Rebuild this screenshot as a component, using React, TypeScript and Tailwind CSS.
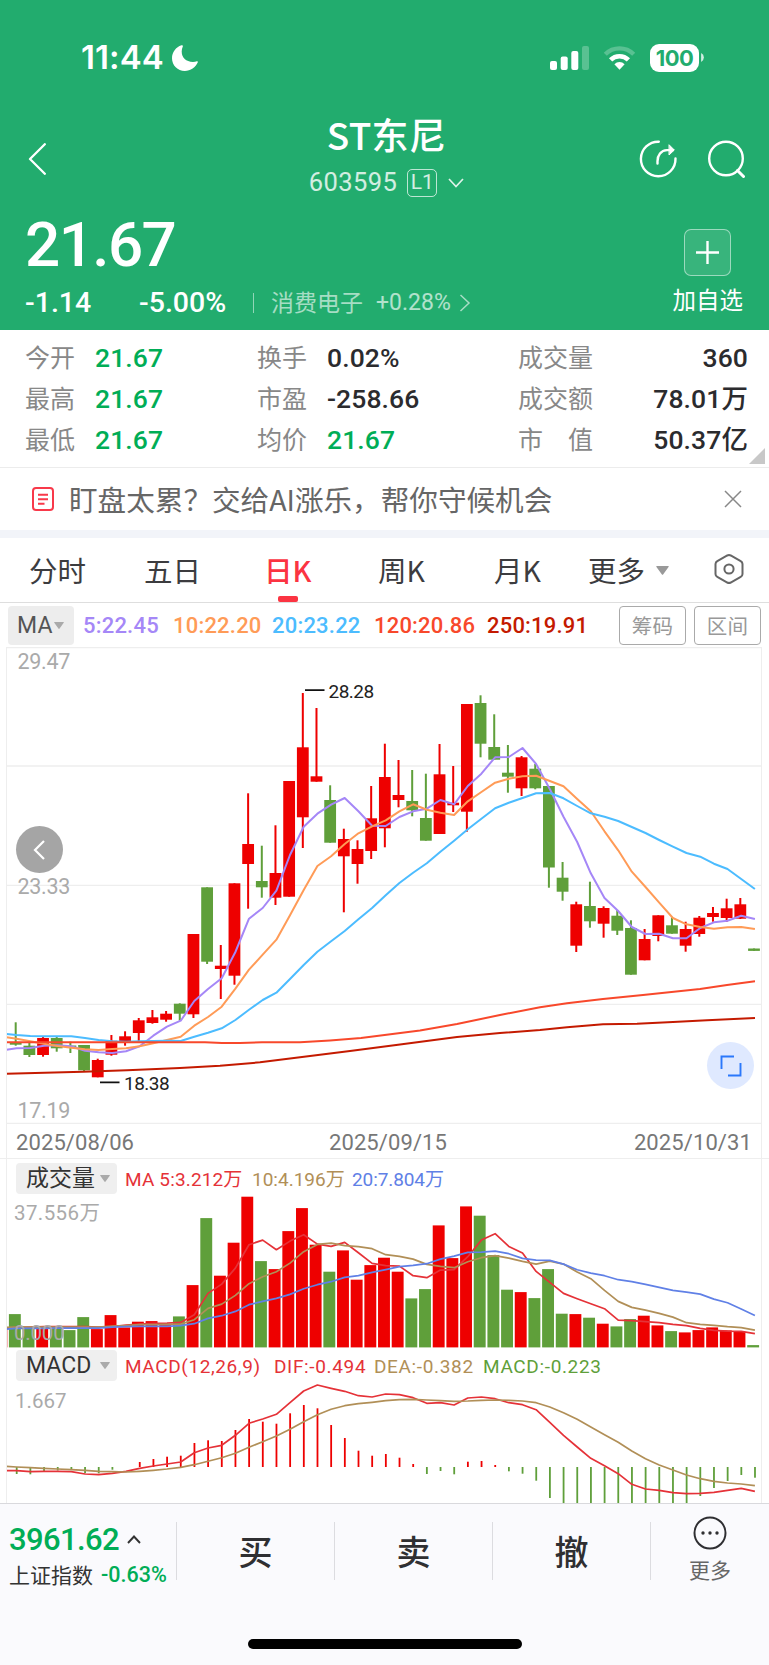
import type { ReactNode } from 'react';

type Candle = ['r' | 'g', number, number, number, number];

const RED = '#ee0000';
const GREEN = '#5f9f3a';

// [color, high, body top, body bottom, low] in chart pixels
const candles: Candle[] = [
  ['g', 375.3, 396, 397.7, 398.7],
  ['g', 396, 398.7, 408, 410],
  ['r', 390, 391, 408, 409.7],
  ['g', 389.7, 391, 401.3, 404.7],
  ['g', 394.7, 398.5, 400, 406],
  ['g', 398, 398, 423.3, 424],
  ['r', 411.7, 413, 430.3, 430.3],
  ['r', 388, 393.7, 407.7, 408.7],
  ['r', 384.3, 389.3, 395, 398.7],
  ['r', 371, 373.3, 386, 394.3],
  ['r', 363, 370.3, 376, 376.7],
  ['r', 364, 366.7, 372.7, 374.7],
  ['g', 356.3, 356.7, 366.7, 373.7],
  ['r', 287, 287, 367.3, 371],
  ['g', 240.3, 240.3, 314.7, 317],
  ['r', 298, 318.7, 322, 352],
  ['r', 236.3, 236.3, 328.7, 337.7],
  ['r', 146.3, 197, 217, 261.7],
  ['g', 198.7, 234, 240.3, 250.7],
  ['r', 178.3, 226, 250.7, 258],
  ['r', 134, 134, 249.7, 249.7],
  ['r', 46, 100.3, 170.3, 201],
  ['r', 61, 129.3, 134.7, 134.7],
  ['g', 138.3, 153, 195.7, 195.7],
  ['r', 181.7, 192, 209.3, 265.3],
  ['r', 193.3, 202, 217, 236.7],
  ['r', 139, 171.3, 204, 212],
  ['r', 96.7, 130, 181.3, 200.3],
  ['r', 113, 148, 153, 160.3],
  ['g', 123, 154, 163.3, 169.3],
  ['g', 126.7, 171, 193.7, 193.7],
  ['r', 97, 127.3, 187, 187],
  ['r', 119, 155.7, 158.3, 165],
  ['r', 57, 57, 164.7, 184.7],
  ['g', 48.3, 56, 96.7, 110.3],
  ['g', 67.3, 100, 112.7, 112.7],
  ['g', 98, 125.7, 129.7, 145.7],
  ['r', 109, 110.3, 141.3, 149],
  ['g', 117, 121.7, 141.3, 142.3],
  ['g', 139, 139, 220.5, 240.7],
  ['g', 215, 230.7, 244.7, 253.7],
  ['r', 254.7, 257.3, 298.7, 305],
  ['g', 234.7, 259, 274.3, 280.7],
  ['r', 259.3, 261, 276.7, 290.7],
  ['g', 263, 268.7, 283.7, 288],
  ['g', 273.3, 281, 327.7, 327.7],
  ['r', 282, 292, 313.3, 313.3],
  ['r', 268.3, 268.3, 289, 294.3],
  ['g', 270.3, 278.3, 286.7, 286.7],
  ['r', 274.7, 282, 298.7, 304.7],
  ['r', 269, 270.7, 287, 289.7],
  ['r', 260, 266, 270, 274.7],
  ['r', 251.7, 261.3, 271, 275],
  ['r', 251, 257.3, 271.7, 272],
  ['g', 301.5, 301.5, 303.9, 303.9],
];

// every series starts with the point on the left edge of the chart
const ma5 = [402.7, 401.3, 401, 398.7, 398.3, 399.3, 403.7, 405.3, 406, 404.3, 399.3, 388.7, 379.7, 373.7, 354, 342, 331.3, 305, 271.7, 261, 243.7, 208, 179.7, 166.7, 157.7, 151, 164.3, 178.7, 179, 170, 164.3, 161.7, 153, 157.3, 139, 126.7, 110.3, 110, 101, 117, 142, 169.7, 195, 226.3, 251, 264, 280, 287, 286.7, 291.3, 291.3, 281, 275.3, 273.7, 268.7, 272];
const ma10 = [390.3, 391.7, 394.3, 396.7, 399, 400.7, 402.3, 403, 402, 401.3, 399.3, 396.3, 393, 389.7, 378.7, 370, 359.7, 341.7, 322.7, 307.7, 292.7, 268.3, 243, 219, 209.3, 197, 186.3, 179.3, 173.3, 164.3, 157.3, 162.7, 165.7, 168, 154.3, 145, 135.7, 131.7, 129.3, 128.7, 134, 139.3, 152, 164.3, 184.3, 203.3, 224.7, 240, 255.7, 271, 277.3, 280, 281.7, 280.3, 280, 282];
const ma20 = [387, 388, 389, 389.3, 389.3, 389.3, 391, 393, 394.3, 394.7, 394.3, 394, 393.7, 394, 389.7, 385.7, 381.3, 373, 362.7, 353, 345.7, 332, 318, 304.7, 294.3, 284, 272.3, 261, 248.3, 236, 225.7, 216.3, 204.7, 193.7, 182.3, 171.7, 161.3, 155.7, 151, 146.3, 146, 151.3, 159, 166.3, 169.7, 174, 180, 186, 193, 199.7, 206, 209.7, 216.7, 222, 232, 242];

const volumes = [33.3, 20.5, 20.7, 20, 17.3, 30.3, 18.3, 32.3, 20, 25.7, 26.3, 22.3, 31, 62.3, 129.3, 71.7, 104.7, 150.7, 86.3, 78.3, 116.3, 139.3, 102.7, 75.7, 97, 67.7, 82.3, 89.7, 75.7, 49, 58.3, 122, 89.3, 141, 131.7, 92.3, 57.7, 55.3, 49.3, 78.3, 33.7, 33.3, 29.7, 23.7, 21, 28.3, 31.7, 22, 16.3, 15, 17.3, 20, 17, 15.7, 2.3];
const vol5 = [19, 20, 20.3, 20.7, 20.7, 20.7, 20.7, 20.3, 20.7, 22.3, 23.3, 24, 24.3, 25, 32.7, 54, 63.3, 79.3, 102.7, 107.3, 97.7, 106.3, 112.7, 103.3, 101, 105, 94.7, 84, 81.7, 81.3, 71.7, 69.7, 77.3, 77.7, 90.7, 107.3, 113.7, 101, 94.3, 76, 65, 54, 48.7, 43.7, 38.7, 27.3, 26.7, 25.7, 24.7, 23, 21.7, 19, 17, 16.3, 16, 13.7];
const vol10 = [20, 20.3, 20.3, 20.3, 20.3, 20.3, 20.3, 20.3, 21.3, 21.7, 22.7, 22.7, 23, 23.3, 27.7, 39, 43.3, 52, 63.7, 70.7, 75.7, 84.3, 95.7, 103, 104.3, 101.7, 100.7, 98.7, 92.7, 91, 88.3, 83, 81, 79.7, 85.7, 89.7, 91.7, 89.3, 86, 83.3, 86.3, 83.3, 75.3, 68.7, 57, 46, 40, 37.3, 34, 30.3, 24.7, 23, 22, 20.7, 19.7, 17.3];
const vol20 = [18.3, 19, 19, 19, 19.3, 19.3, 19.3, 19.3, 20.3, 20.7, 21, 21, 21, 21.7, 23.7, 29, 31.7, 36, 42.7, 46, 49, 53, 58.7, 62.7, 65.7, 70, 71.7, 75, 77.7, 80.7, 82, 83.7, 88.3, 91.3, 95, 95.3, 96.3, 93.7, 89, 87.3, 87, 83.3, 77.7, 74.3, 71.7, 67.7, 65.7, 63, 60, 57, 55.3, 53.3, 48.3, 44.7, 38.3, 32];

const macd = [-7, -7.3, -4.7, -3.5, -3, -6.3, -6.3, -2.7, 0, 5, 8, 10.3, 11.3, 24, 26.7, 26, 37, 48, 45.3, 43.3, 53.7, 62, 58.7, 42, 29, 16.3, 11.3, 13, 9.3, 3, -7, -4, -7.3, 5.3, 6, 2, -4.3, -6.7, -13.7, -31, -36, -36, -36, -36, -36, -36, -36, -36, -36, -36, -29, -21, -14, -8, -10.7];
const dif = [-3.7, -3.7, -4.7, -4.3, -4.3, -4.7, -7, -7.7, -6.3, -4.3, -1.3, 1, 3, 5, 14.3, 19, 21.7, 31.7, 43.7, 48, 52.7, 64.3, 76, 82, 78.7, 75.7, 71.3, 70, 73, 72.3, 69.3, 63.7, 64.3, 62, 69, 70, 68.3, 64.3, 62.3, 57.3, 44.7, 31.7, 20, 8.7, 1.3, -6.7, -17.3, -22, -23.3, -25.7, -26.7, -26.3, -25.3, -23.3, -21.3, -24.3];
const dea = [0.7, 0, -0.7, -1.3, -2, -2.7, -3.3, -4.3, -4.7, -5, -4.3, -3.3, -2, -0.3, 2.3, 5.7, 9.3, 13.7, 19.7, 25.3, 31, 37.7, 45.3, 52.3, 57.7, 61.3, 63.3, 64.7, 66.3, 67.3, 67.7, 67, 66.3, 65.7, 66, 66.7, 67, 66.7, 66, 64.3, 60, 54.3, 47.7, 40, 32.3, 24.7, 16, 8.3, 2, -3, -8, -11.7, -14.3, -16, -17, -18.7];

const STEP = 13.672;
const candleX = (i: number) => 15.7 + i * STEP;

// baseline set: y is measured up from it, otherwise down from the top
function toPoints(values: number[], baseline?: number) {
  return values
    .map((v, i) => {
      const x = i === 0 ? 6.5 : 16.6 + (i - 1) * STEP;
      const y = baseline === undefined ? v : baseline - v;
      return `${x.toFixed(1)},${y.toFixed(1)}`;
    })
    .join(' ');
}

function Line({ points, color, width = 2 }: { points: string; color: string; width?: number }) {
  return <polyline points={points} fill="none" stroke={color} strokeWidth={width} strokeLinejoin="round" />;
}

function Caret({ className }: { className: string }) {
  return (
    <svg viewBox="0 0 10 7" className={className}>
      <path d="M0.6 0h8.8q.8 0 .3.7L5.6 6.5q-.6.8-1.2 0L.3.7Q-.2 0 .6 0z" fill="currentColor" />
    </svg>
  );
}

function StatusBar() {
  return (
    <div className="flex h-[114px] items-center pt-[1px] pr-[65px] pl-[81px]">
      <span className="w-[84px] font-['Inter'] text-[33px] leading-none font-semibold tracking-[0.1px] whitespace-nowrap">11:44</span>
      <svg viewBox="0 0 26 26" className="ml-[7px] h-[26px] w-[26px]">
        <path d="M9.5.3C3.9 2 0 7.3 0 13.2 0 20.3 5.7 26 12.8 26c5.7 0 10.9-3.5 13-8.7.3-.7-.2-1.2-.9-1-1.2.4-2.5.6-3.9.6C14 16.9 9.700 12.5 9.700 6.5c0-1.900.4-3.600 1.100-5.100C11.200.5 10.500 0 9.500.3z" fill="white" />
      </svg>
      <div className="ml-auto flex items-center">
        <svg viewBox="0 0 39 24" className="h-[24px] w-[39px]" fill="white">
          <rect x="0" y="15" width="7" height="9" rx="2" />
          <rect x="10.7" y="10.5" width="7" height="13.5" rx="2" />
          <rect x="21.3" y="5" width="7" height="19" rx="2" />
          <rect x="32" y="0" width="7" height="24" rx="2" opacity="0.25" />
        </svg>
        <svg viewBox="0 0 33 24" className="ml-[14px] h-[24px] w-[33px]">
          <path d="M2.3 8.2a20.2 20.2 0 0 1 28.4 0" stroke="white" strokeWidth="4.4" fill="none" opacity="0.25" />
          <path d="M7.6 13.900a12.6 12.6 0 0 1 17.8 0" stroke="white" strokeWidth="4.6" fill="none" />
          <path d="M11.400 18.200a7.200 7.200 0 0 1 10.200 0L16.500 23.800z" fill="white" />
        </svg>
        <div className="ml-[14px] flex h-[28px] w-[49px] items-center justify-center rounded-[9px] bg-white font-['Inter'] text-[22px] leading-none font-bold tracking-[-0.6px] text-[#22ac6e]">
          100
        </div>
        <svg viewBox="0 0 3 10" className="ml-[2px] h-[9px] w-[3px]">
          <path d="M0 0q3 1.5 3 5t-3 5z" fill="white" opacity="0.8" />
        </svg>
      </div>
    </div>
  );
}

function NavBar() {
  return (
    <div className="flex h-[90px] items-center justify-between pr-[24px] pl-[28px]">
      <div className="w-[106px]">
        <svg viewBox="0 0 18 32" className="h-[32px] w-[18px]" fill="none" stroke="white" strokeWidth="2.300">
          <path d="M16.800 1.200L2 16l14.800 14.800" strokeLinecap="round" strokeLinejoin="round" />
        </svg>
      </div>
      <div className="flex flex-col items-center pb-[6px]">
        <div className="text-[37px] leading-[38px] font-medium tracking-[0.300px]">ST东尼</div>
        <div className="mt-[15px] flex h-[30px] items-center font-['Roboto']">
          <span className="text-[25.500px] leading-none tracking-[0.400px] text-white/80">603595</span>
          <span className="ml-[10px] flex h-[28px] w-[30px] items-center justify-center rounded-[5px] border border-white/70 text-[21px] leading-none text-white/80">L1</span>
          <svg viewBox="0 0 16 10" className="ml-[11px] h-[10px] w-[16px]" fill="none" stroke="white" strokeWidth="1.700" opacity="0.85">
            <path d="M1 1l7 7.500L15 1" />
          </svg>
        </div>
      </div>
      <div className="flex w-[106px] items-center justify-between">
        <svg viewBox="0 0 38 38" className="h-[38px] w-[38px]" fill="none" stroke="white" strokeWidth="2.400" strokeLinecap="round">
          <path d="M19.800 1.700A17.300 17.300 0 1 0 36.500 18.500" />
          <path d="M18.500 23.500v-2.300c0-6.200 3.500-10.900 9.500-11.100h6" />
          <path d="M30.300 5l5 5-5 4.700z" fill="white" strokeWidth="1" strokeLinejoin="round" />
        </svg>
        <svg viewBox="0 0 38 38" className="h-[38px] w-[38px]" fill="none" stroke="white" strokeWidth="2.400" strokeLinecap="round">
          <circle cx="19" cy="18.500" r="16.800" />
          <path d="M30.500 30.500l6 6" strokeWidth="3" />
        </svg>
      </div>
    </div>
  );
}

function PriceHeader() {
  return (
    <div className="flex h-[126px] justify-between pr-[26px] pl-[25px]">
      <div>
        <div className="mt-[10px] font-['Roboto'] text-[62px] leading-[62px] font-medium tracking-[-1.600px]">21.67</div>
        <div className="mt-[11px] flex h-[32px] items-center font-['Roboto'] leading-none">
          <span className="w-[114px] text-[28.500px] font-medium">-1.14</span>
          <span className="w-[114px] text-[28.500px] font-medium">-5.00%</span>
          <span className="h-[20px] w-px bg-white/50" />
          <span className="ml-[17px] -mt-[3px] font-['Noto_Sans_CJK_SC'] text-[23px] text-white/60">消费电子</span>
          <span className="ml-[13px] -mt-[1px] text-[23px] text-white/65">+0.28%</span>
          <svg viewBox="0 0 12 18" className="ml-[8px] -mt-[1px] h-[18px] w-[12px]" fill="none" stroke="white" strokeWidth="1.500" opacity="0.600">
            <path d="M1.500 1l8.500 8-8.500 8" />
          </svg>
        </div>
      </div>
      <div className="flex flex-col items-center pt-[25px]">
        <div className="flex h-[47px] w-[47px] items-center justify-center rounded-[7px] border border-white/50 bg-white/10">
          <svg viewBox="0 0 24 24" className="h-[23px] w-[23px]" stroke="white" strokeWidth="2.500">
            <path d="M12 0v24M0 12h24" />
          </svg>
        </div>
        <div className="mt-[11px] text-[23.500px] leading-[24px]">加自选</div>
      </div>
    </div>
  );
}

const stats = [
  [['今开', '21.67', true], ['换手', '0.02%', false], ['成交量', '360', false]],
  [['最高', '21.67', true], ['市盈', '-258.66', false], ['成交额', '78.01万', false]],
  [['最低', '21.67', true], ['均价', '21.67', true], ['市　值', '50.37亿', false]],
] as [string, string, boolean][][];

function Stats() {
  return (
    <div className="relative h-[138px] border-b border-[#ececec] pt-[7px]">
      {stats.map((row, r) => (
        <div key={r} className="flex h-[41px] items-center pr-[21px] pl-[25px] leading-none">
          {row.map(([label, value, up], c) => (
            <div key={label} className={c === 0 ? 'flex w-[232px] items-center' : c === 1 ? 'flex w-[261px] items-center' : 'flex flex-1 items-center justify-between'}>
              <span className="-mt-[2px] mr-[20px] text-[25px] text-[#888]">{label}</span>
              <span className={`${up ? 'text-[#00ad56]' : 'text-[#2b2b2e]'} pt-[2px] font-['Roboto','Noto_Sans_CJK_SC'] text-[26.500px] font-medium tracking-[0.100px]`}>{value}</span>
            </div>
          ))}
        </div>
      ))}
      <svg viewBox="0 0 16 16" className="absolute right-[4px] bottom-[3px] h-[16px] w-[16px]">
        <path d="M16 0v16H0z" fill="#c8c8c8" />
      </svg>
    </div>
  );
}

function Notice() {
  return (
    <div className="flex h-[62px] items-center pr-[27px] pl-[32px]">
      <svg viewBox="0 0 22 24" className="h-[24px] w-[22px]" fill="none" stroke="#f8394a" strokeWidth="2">
        <rect x="1" y="1" width="20" height="22" rx="3" />
        <path d="M6 7.700h10M6 12.200h10M6 16.700h6.500" />
      </svg>
      <span className="ml-[15px] pt-[1px] text-[28.600px] leading-none text-[#666]">盯盘太累？交给AI涨乐，帮你守候机会</span>
      <svg viewBox="0 0 18 18" className="ml-auto h-[18px] w-[18px]" stroke="#888" strokeWidth="1.500">
        <path d="M1 1l16 16M17 1L1 17" />
      </svg>
    </div>
  );
}

function Tabs() {
  return (
    <div className="flex h-[65px] items-center border-b border-[#dedede] pl-[29px] text-[28.500px] leading-none text-[#3c3c3f]">
      <span className="w-[115px]">分时</span>
      <span className="w-[120px]">五日</span>
      <span className="relative w-[114px] font-medium text-[#fb3442]">
        日K
        <span className="absolute top-[40px] left-[14px] h-[6px] w-[20px] rounded-[2px] bg-[#fb3442]" />
      </span>
      <span className="w-[116px]">周K</span>
      <span className="w-[94px]">月K</span>
      <span>更多</span>
      <Caret className="ml-[11px] h-[9px] w-[13px] text-[#999]" />
      <svg viewBox="0 0 30 30" className="mb-[2px] ml-[45px] h-[30px] w-[30px]" fill="none" stroke="#666" strokeWidth="2">
        <path d="M13.300 1.500q1.700-.9 3.400 0l10 5.600q1.800 1 1.800 3v9.800q0 2-1.800 3l-10 5.600q-1.700.9-3.400 0l-10-5.600q-1.800-1-1.800-3v-9.800q0-2 1.800-3z" />
        <circle cx="15" cy="15" r="4.600" />
      </svg>
    </div>
  );
}

function MaRow() {
  return (
    <div className="flex h-[44px] items-center pr-[8px] pl-[8px] font-['Roboto'] text-[22px] leading-none font-medium tracking-[0.200px]">
      <div className="flex h-[39px] w-[66px] items-center rounded-[4px] bg-[#ededed] pl-[9px] text-[23px] font-normal text-[#555]">
        MA
        <Caret className="ml-[1px] h-[7px] w-[10px] text-[#aaa]" />
      </div>
      <span className="ml-[9px] w-[90px] pt-[1px] text-[#a587f7]">5:22.45</span>
      <span className="w-[99px] pt-[1px] text-[#ff9b57]">10:22.20</span>
      <span className="w-[102px] pt-[1px] text-[#4cbcff]">20:23.22</span>
      <span className="w-[113px] pt-[1px] text-[#f8482b]">120:20.86</span>
      <span className="pt-[1px] text-[#c41a00]">250:19.91</span>
      <span className="ml-auto flex h-[39px] w-[67px] items-center justify-center rounded-[4px] border border-[#aaa] font-['Noto_Sans_CJK_SC'] text-[20.500px] font-normal text-[#999]">筹码</span>
      <span className="ml-[8px] flex h-[39px] w-[67px] items-center justify-center rounded-[4px] border border-[#aaa] font-['Noto_Sans_CJK_SC'] text-[20.500px] font-normal text-[#999]">区间</span>
    </div>
  );
}

function PriceChart() {
  return (
    <div className="relative h-[477px]">
      <svg viewBox="0 0 769 477" className="block h-[477px] w-[769px] font-['Roboto']">
        {[0.7, 119, 238.3, 357.3, 476.3].map((y) => (
          <path key={y} d={`M6 ${y}H762`} stroke="#eeeeee" strokeWidth="1.300" />
        ))}
        {candles.map(([color, high, top, bottom, low], i) => (
          <g key={i} fill={color === 'r' ? RED : GREEN}>
            <rect x={candleX(i) - 1} y={high} width="2" height={low - high} />
            <rect x={candleX(i) - 5.9} y={top} width="11.800" height={Math.max(bottom - top, 1.5)} />
          </g>
        ))}
        <Line points={toPoints(ma5)} color="#a587f7" />
        <Line points={toPoints(ma10)} color="#ff9b57" />
        <Line points={toPoints(ma20)} color="#4cbcff" />
        <Line points="6.500,395.300 205,395.300 222,396 240,396 262,395.200 300,395.300 330,393.500 361,391 420,383.500 457,377 500,368 540,360.300 567,356.300 603,352 643,348 700,342 727,338 755,334.300" color="#f8482b" />
        <Line points="6.500,426.700 83,424.700 127,423.300 180,421 220,418.700 260,415.300 350,404 400,397.500 457,390 500,386 540,383 567,380.300 603,377.300 637,376.700 673,375 707,373.300 755,371" color="#c41a00" />
        <g fill="#aaaaaa" fontSize="21.500" letterSpacing="-0.300">
          <text x="17.500" y="22">29.47</text>
          <text x="17.500" y="246.800">23.33</text>
          <text x="17.500" y="471">17.19</text>
        </g>
        <g fill="#222222" fontSize="19" letterSpacing="-0.500">
          <path d="M305 43.200h19.500M100 435.300h19.500" stroke="#111111" strokeWidth="1.800" />
          <text x="328.500" y="50.500">28.28</text>
          <text x="124" y="442.500">18.38</text>
        </g>
      </svg>
      <button className="absolute top-[179px] left-[16px] flex h-[47px] w-[47px] items-center justify-center rounded-full bg-[#a5a5a5]">
        <svg viewBox="0 0 12 20" className="mr-[2px] h-[20px] w-[12px]" fill="none" stroke="white" strokeWidth="2.200">
          <path d="M11 1L2 10l9 9" />
        </svg>
      </button>
      <button className="absolute top-[395px] left-[707px] flex h-[47px] w-[47px] items-center justify-center rounded-full bg-[#dfe9ff]">
        <svg viewBox="0 0 22 22" className="h-[22px] w-[22px]" fill="none" stroke="#2b78fb" strokeWidth="1.900">
          <path d="M1.500 14V1.500H14M20.500 8v12.500H8" />
        </svg>
      </button>
    </div>
  );
}

function Dates() {
  return (
    <div className="flex h-[35px] items-center justify-between border-b border-[#eeeeee] pt-[4px] pr-[17px] pl-[16px] font-['Roboto'] text-[22px] leading-none tracking-[0.100px] text-[#777]">
      <span>2025/08/06</span>
      <span className="ml-[8px]">2025/09/15</span>
      <span>2025/10/31</span>
    </div>
  );
}

function IndicatorHeader({ name, children }: { name: string; children: ReactNode }) {
  return (
    <div className="flex h-[31px] items-center pl-[16px] font-['Roboto','Noto_Sans_CJK_SC'] text-[19px] leading-none whitespace-pre">
      <div className="flex h-[31px] w-[101px] items-center justify-between rounded-[4px] bg-[#efefef] pr-[7px] pl-[10px] text-[23px] text-[#333]">
        {name}
        <Caret className="h-[7px] w-[10px] text-[#aaa]" />
      </div>
      {children}
    </div>
  );
}

function VolumeChart() {
  const base = 153.4;
  return (
    <svg viewBox="0 0 769 155" className="block h-[155px] w-[769px] font-['Roboto','Noto_Sans_CJK_SC']">
      <rect x="6" y={base - 18} width="1.300" height="18" fill={RED} />
      {volumes.map((v, i) => (
        <rect key={i} x={candleX(i) - 6.8} y={base - v} width="11.900" height={v} fill={candles[i][0] === 'r' ? RED : GREEN} />
      ))}
      <Line points={toPoints(vol5, base)} color="#e53238" width={1.7} />
      <Line points={toPoints(vol10, base)} color="#b18f57" width={1.7} />
      <Line points={toPoints(vol20, base)} color="#6080e6" width={1.7} />
      <g fill="#aaaaaa" fontSize="20.500">
        <text x="14" y="26.300" letterSpacing="0.400">37.556万</text>
        <text x="14" y="146" letterSpacing="-0.200">0.000</text>
      </g>
    </svg>
  );
}

function MacdChart() {
  const base = 86;
  return (
    <svg viewBox="0 0 769 122" className="block h-[122px] w-[769px] font-['Roboto']">
      {macd.map((v, i) => (
        <rect key={i} x={candleX(i) + 0.1} y={v > 0 ? base - v : base} width="1.800" height={Math.abs(v)} fill={v > 0 ? RED : GREEN} />
      ))}
      <Line points={toPoints(dif, base)} color="#e53238" width={1.7} />
      <Line points={toPoints(dea, base)} color="#b18f57" width={1.7} />
      <text x="15" y="27" fill="#aaaaaa" fontSize="20.500">1.667</text>
    </svg>
  );
}

function BottomBar() {
  return (
    <div className="h-[162px] border-t border-[#d9d9dd] bg-[#fafafd]">
      <div className="flex h-[94px] items-center leading-none">
        <div className="w-[176px] shrink-0 pt-[7px] pl-[9px] whitespace-nowrap">
          <div className="flex items-center font-['Roboto'] text-[31px] font-medium tracking-[-0.600px] text-[#00ad56]">
            3961.62
            <svg viewBox="0 0 14 9" className="ml-[8px] h-[9px] w-[14px]" fill="none" stroke="#333" strokeWidth="1.900">
              <path d="M1 8l6-6.500L13 8" />
            </svg>
          </div>
          <div className="mt-[9px] flex items-center text-[21px] text-[#333]">
            上证指数
            <span className="ml-[8px] font-['Roboto'] text-[21.500px] font-medium text-[#00ad56]">-0.63%</span>
          </div>
        </div>
        {['买', '卖', '撤'].map((label) => (
          <div key={label} className="flex h-[58px] w-[158px] shrink-0 items-center justify-center border-l border-[#dcdce0] text-[34px] font-medium text-[#2f2f32]">
            {label}
          </div>
        ))}
        <div className="h-[58px] w-px shrink-0 bg-[#dcdce0]" />
        <div className="flex flex-1 flex-col items-center pb-[7px]">
          <svg viewBox="0 0 34 34" className="h-[34px] w-[34px]" fill="#2f2f32">
            <circle cx="17" cy="17" r="15.500" fill="none" stroke="#2f2f32" strokeWidth="2" />
            <circle cx="10" cy="17" r="1.700" />
            <circle cx="17" cy="17" r="1.700" />
            <circle cx="24" cy="17" r="1.700" />
          </svg>
          <span className="mt-[9px] text-[21px] text-[#666]">更多</span>
        </div>
      </div>
      <div className="mx-auto mt-[41px] h-[10px] w-[274px] rounded-full bg-black" />
    </div>
  );
}

export default function App() {
  return (
    <div className="h-[1665px] w-[769px] overflow-hidden bg-white font-['Noto_Sans_CJK_SC',sans-serif]">
      <div className="h-[330px] bg-[#22ac6e] text-white">
        <StatusBar />
        <NavBar />
        <PriceHeader />
      </div>
      <Stats />
      <Notice />
      <div className="h-[8px] bg-[#f2f4f9]" />
      <Tabs />
      <MaRow />
      <div className="relative">
        <PriceChart />
        <Dates />
        <div className="pt-[4px]">
          <IndicatorHeader name="成交量">
            <span className="ml-[8px] w-[127px] pt-[1px] tracking-[0.150px] text-[#e53238]">MA 5:3.212万</span>
            <span className="w-[100px] pt-[1px] text-[#b18f57]">10:4.196万</span>
            <span className="pt-[1px] tracking-[-0.100px] text-[#6080e6]">20:7.804万</span>
          </IndicatorHeader>
        </div>
        <VolumeChart />
        <div className="pt-[1px]">
          <IndicatorHeader name="MACD">
            <span className="ml-[8px] w-[149px] pt-[1px] tracking-[0.600px] text-[#e53238]">MACD(12,26,9)</span>
            <span className="w-[100px] pt-[1px] tracking-[0.650px] text-[#e53238]">DIF:-0.494</span>
            <span className="w-[109px] pt-[1px] tracking-[0.650px] text-[#b18f57]">DEA:-0.382</span>
            <span className="pt-[1px] tracking-[0.650px] text-[#5f9f3a]">MACD:-0.223</span>
          </IndicatorHeader>
        </div>
        <MacdChart />
        <div className="pointer-events-none absolute top-0 bottom-0 left-[6px] w-[756px] border-x border-[#eeeeee]" />
      </div>
      <BottomBar />
    </div>
  );
}
